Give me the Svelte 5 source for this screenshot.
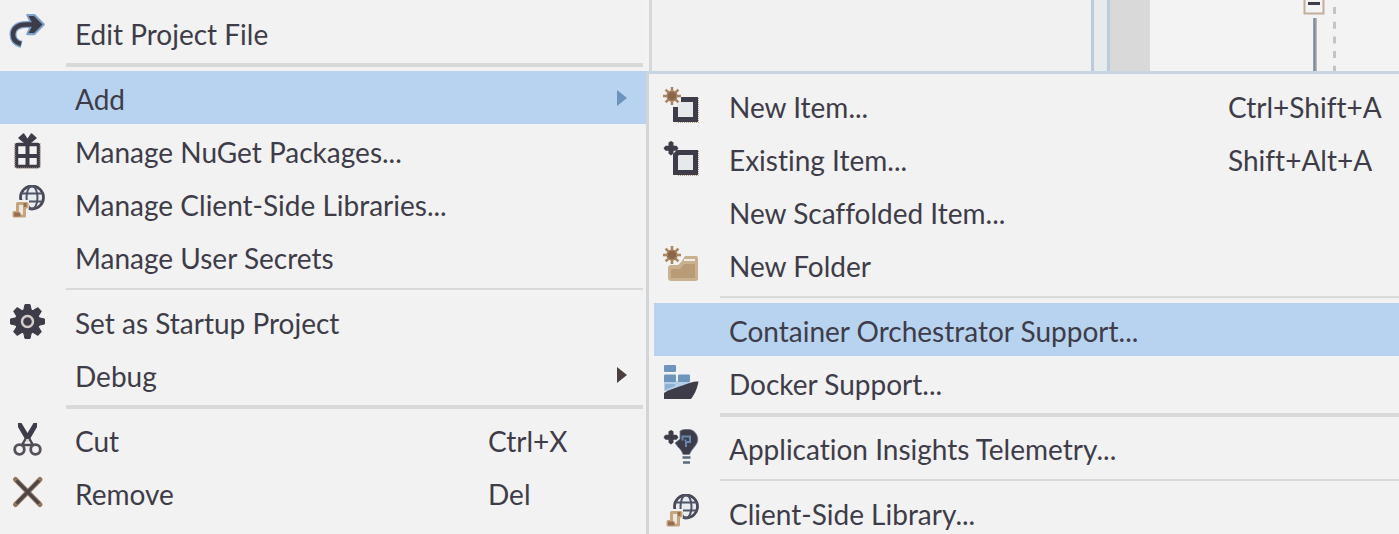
<script>
  const projectMenu = [
    { label: 'Edit Project File', icon: 'redo' },
    { separator: 'thick' },
    { label: 'Add', expands: true, active: true },
    { label: 'Manage NuGet Packages...', icon: 'gift' },
    { label: 'Manage Client-Side Libraries...', icon: 'globe' },
    { label: 'Manage User Secrets' },
    { separator: 'thin' },
    { label: 'Set as Startup Project', icon: 'gear' },
    { label: 'Debug', expands: true },
    { separator: 'thick' },
    { label: 'Cut', icon: 'scissors', keys: 'Ctrl+X' },
    { label: 'Remove', icon: 'cross', keys: 'Del' }
  ];

  const addMenu = [
    { label: 'New Item...', icon: 'newItem', keys: 'Ctrl+Shift+A' },
    { label: 'Existing Item...', icon: 'existingItem', keys: 'Shift+Alt+A' },
    { label: 'New Scaffolded Item...' },
    { label: 'New Folder', icon: 'folder' },
    { separator: 'thin' },
    { label: 'Container Orchestrator Support...', active: true },
    { label: 'Docker Support...', icon: 'docker' },
    { separator: 'thick' },
    { label: 'Application Insights Telemetry...', icon: 'insights' },
    { separator: 'thin' },
    { label: 'Client-Side Library...', icon: 'globe' }
  ];

  const eighths = [0, 45, 90, 135, 180, 225, 270, 315];
</script>

{#snippet star()}
  <circle cx="9" cy="9" r="5.5" fill="#94704f" />
  <g stroke="#a98561" stroke-width="2.600">
    {#each eighths as angle}
      <path d="M9 9V0" transform="rotate({angle} 9 9)" />
    {/each}
  </g>
  <circle cx="9" cy="9" r="4" fill="#8a674b" />
{/snippet}

{#snippet plus()}
  <path d="M8 1L10.500 2.500V5.700H13.500L15.500 8.200L13.500 10.700H10.500V13.500L8 15.500L5.500 13.500V10.700H2.500L0.500 8.200L2.500 5.700H5.500V2.500Z" fill="#3e3c49" />
{/snippet}

{#snippet icon(name)}
  <svg class="icon" viewBox="0 0 36 37" fill="none" aria-hidden="true">
    {#if name === 'redo'}
      <g stroke="#7ba2cc" stroke-width="7" stroke-linejoin="round">
        <path d="M27 10.5H17C8 10.5 4 15 4 20.500C4 25.500 7 29 12.500 30.500" />
      </g>
      <path d="M18.500 1H25L34.500 10.500L25 20H18.500L23 10.500Z" fill="#3e3c49" stroke="#7ba2cc" stroke-width="2.500" stroke-linejoin="round" />
      <path d="M28 10.500H17C8 10.500 4 15 4 20.500C4 25.500 7 28.500 12 30" stroke="#3e3c49" stroke-width="4.500" />
      <path d="M19.500 2H25L33.500 10.500L25 19H19.500L24 10.500Z" fill="#3e3c49" />
    {:else if name === 'gift'}
      <rect x="7.500" y="12.500" width="22" height="22" rx="1" fill="#f2f2f2" stroke="#3e3c49" stroke-width="3.500" />
      <path d="M18.500 11V35M7 24H30" stroke="#3e3c49" stroke-width="4" />
      <path d="M18.500 13L10 6L14.500 2L18.500 8L22.500 2L27 6Z" fill="#3e3c49" stroke="#3e3c49" stroke-width="1.500" stroke-linejoin="round" />
      <path d="M6 11V36H31V11" stroke="#b99a7e" stroke-width="1" stroke-dasharray="1 1" />
    {:else if name === 'globe'}
      <circle cx="23" cy="12.500" r="11.500" fill="#e9edf1" stroke="#4a4856" stroke-width="2.800" />
      <g stroke="#4f5464" stroke-width="2">
        <ellipse cx="23" cy="12.500" rx="5.500" ry="11.500" />
        <path d="M12.500 8.500H33.500M12.500 16.500H33.500" />
      </g>
      <path d="M7 17H18V22L16 32H4V27H7Z" fill="#f2f2f2" stroke="#f2f2f2" stroke-width="4" />
      <path d="M8.500 18.500H18V22H15.500V31H5V27.500H8.500Z" fill="#eee7dd" stroke="#c6a47e" stroke-width="3" stroke-linejoin="round" />
      <path d="M5 27.500H11.500V31.500H5ZM14.500 18H17.500V22H14.500Z" fill="#94704f" />
    {:else if name === 'gear'}
      <circle cx="18.500" cy="18.500" r="12.500" fill="#3e3c49" />
      {#each eighths as angle}
        <path d="M14.500 8L16 1.500H21L22.500 8Z" fill="#3e3c49" stroke="#3e3c49" stroke-linejoin="round" transform="rotate({angle} 18.500 18.500)" />
      {/each}
      <circle cx="18.500" cy="18.500" r="5.500" stroke="#d5cdc5" stroke-width="2.500" />
      <circle cx="18.500" cy="18.500" r="2.500" fill="#3e3c49" />
    {:else if name === 'scissors'}
      <path d="M9 2L12.500 2L18.500 12L24.500 2L28 2V6L21 18H16L9 6Z" fill="#3e3c49" />
      <path d="M17 17L12.500 25M20 17L24.500 25M12 24H25" stroke="#4d4954" stroke-width="2.500" />
      <circle cx="10.500" cy="28.500" r="4.800" stroke="#56505a" stroke-width="2.800" />
      <circle cx="26.500" cy="28.500" r="4.800" stroke="#56505a" stroke-width="2.800" />
      <circle cx="18.500" cy="19.500" r="1.500" fill="#d8d4d0" />
    {:else if name === 'cross'}
      <path d="M6.500 5.500L31 30.500M31 5.500L6.500 30.500" stroke="#94745a" stroke-width="5" stroke-linecap="round" />
      <path d="M7.500 6.500L30 29.500M30 6.500L7.500 29.500" stroke="#4b444b" stroke-width="3" />
    {:else if name === 'newItem'}
      <path d="M12.500 20V32.500H32.500V12.500H18" fill="#e5e9ea" stroke="#3e3c49" stroke-width="5" />
      <path d="M15 35.500H35.500V11" stroke="#b99a7e" stroke-width="1" stroke-dasharray="1 1" />
      {@render star()}
    {:else if name === 'existingItem'}
      <path d="M12.500 15L15 12.500H32.500V32.500H12.500Z" fill="#e5e9ea" stroke="#3e3c49" stroke-width="5" />
      <path d="M15 35.500H35.500V11" stroke="#b99a7e" stroke-width="1" stroke-dasharray="1 1" />
      {@render plus()}
    {:else if name === 'folder'}
      <path d="M20 13L22 10H34L35 12V34L33 35H7L5 33V21L7 19H15L19 15Z" fill="#c9b08e" />
      <path d="M21 14H32" stroke="#f2ede6" stroke-width="2" />
      <path d="M8 23H17L21 18H32V32H8Z" fill="#ba9b77" />
      {@render star()}
    {:else if name === 'docker'}
      <path d="M1 17H27V20L10 27H1Z" fill="#b5cfe9" />
      <g fill="#6e95bd">
        <rect x="1" y="1" width="12" height="7" rx="1" />
        <rect x="1" y="10.500" width="12" height="7.500" rx="1" />
        <rect x="15" y="10.500" width="12" height="7.500" rx="1" />
      </g>
      <path d="M2 20H12V22L2 26Z" fill="#8fb1d4" />
      <path d="M1 29C7 25 16 23 22 20.500C27 18.500 31 17 35.500 17.500C34 26 31 31 28 35H1Z" fill="#3e3c49" />
    {:else if name === 'insights'}
      <path d="M17 2C21 -0.500 27 -0.500 30.500 2C35.500 6 36 12 32.500 16.500C30 20 28 21.500 26.500 25.500H20C19 22 17 20 15 18L12 14L17 10Z" fill="#3e3c49" stroke="#6e8096" stroke-width="0.800" />
      <path d="M19.500 11.500V7.500H27V13H23V18M22.500 10.500V12" stroke="#6488b0" stroke-width="2" />
      <path d="M19.500 28.500H27.500M20 33.500H27" stroke="#5c6a7c" stroke-width="2.500" />
      {@render plus()}
    {/if}
  </svg>
{/snippet}

{#snippet menu(items)}
  {#each items as item}
    {#if item.separator}
      <li class="separator {item.separator}" role="separator"></li>
    {:else}
      <li role="none">
        <button type="button" role="menuitem" class="row" class:active={item.active} aria-haspopup={item.expands ? 'menu' : undefined}>
          {@render icon(item.icon)}
          <span class="label">{item.label}</span>
          <span class="keys">{item.keys ?? ''}</span>
          <span class="expander">
            {#if item.expands}
              <svg viewBox="0 0 11 18" aria-hidden="true"><path d="M0 1L10 9L0 17Z" /></svg>
            {/if}
          </span>
        </button>
      </li>
    {/if}
  {/each}
{/snippet}

<main>
  <ul class="menu project" role="menu" aria-label="Project">
    {@render menu(projectMenu)}
  </ul>
  <section class="side">
    <div class="editor">
      <div class="pane"></div>
      <div class="splitter"></div>
      <div class="margin"></div>
      <div class="code">
        <svg viewBox="0 0 34 71" fill="none" aria-hidden="true">
          <path d="M1.500 0V13.500H20.500V0" stroke="#c2ae9b" stroke-width="2" />
          <path d="M5 3.500H17" stroke="#3e3c49" stroke-width="3" />
          <path d="M12 18V71" stroke="#c9b29b" stroke-width="4" />
          <path d="M11.500 18V71" stroke="#6d8fb5" stroke-width="2" />
          <path d="M31.500 7V71" stroke="#c4c4c4" stroke-width="3" stroke-dasharray="7 7.700" />
        </svg>
      </div>
    </div>
    <ul class="menu add" role="menu" aria-label="Add">
      {@render menu(addMenu)}
    </ul>
  </section>
</main>

<style>
  :global(body) {
    background: #f3f3f3;
  }

  main {
    display: grid;
    grid-template-columns: 646fr 753fr;
    height: 100vh;
    overflow: hidden;
    font-family: Lato, 'Open Sans', sans-serif;
    font-size: 28px;
    font-variant-ligatures: none;
    line-height: 36px;
    color: #3e3c49;
  }

  .menu {
    list-style: none;
    margin: 0;
    background: #f2f2f2;
  }

  .project {
    --keys-width: 129px;
    padding: 6px 0 0;
  }

  .add {
    --keys-width: 142px;
    flex: 1;
    padding: 5px 0 0 5px;
    border-top: 3px solid #c8d5e2;
    border-left: 3px solid #d2d5d8;
  }

  .row {
    display: flex;
    align-items: center;
    width: 100%;
    height: 53px;
    padding: 0 0 0 9px;
    border: 0;
    background: none;
    color: inherit;
    font: inherit;
    text-align: left;
    white-space: nowrap;
  }

  .active {
    background: #b8d3ef;
  }

  .icon {
    flex: none;
    width: 36px;
    height: 37px;
    margin-right: 30px;
  }

  .label,
  .keys {
    padding-top: 2px;
  }

  .label {
    flex: 1;
  }

  .keys {
    flex: none;
    width: var(--keys-width);
  }

  .expander {
    flex: none;
    display: flex;
    width: 29px;
  }

  .expander svg {
    width: 11px;
    height: 18px;
    fill: #4b403f;
  }

  .active .expander svg {
    fill: #6c93bd;
  }

  .separator {
    display: flex;
    align-items: center;
    height: 12px;
    padding: 0 3px 0 66px;
  }

  .add .separator {
    padding-right: 0;
  }

  .separator::before {
    content: '';
    flex: 1;
    height: 2px;
    background: #d9d9d9;
  }

  .thick::before {
    height: 4px;
  }

  .side {
    display: flex;
    flex-direction: column;
    min-width: 0;
  }

  .editor {
    display: flex;
    height: 71px;
    background: #f3f3f3;
  }

  .pane {
    flex: 1;
    margin-left: 3px;
    border-left: 3px solid #d6d7d9;
    background: #f1f1f1;
  }

  .splitter {
    width: 13px;
    border: solid #bccbdb;
    border-width: 0 3px;
    background: #e7ebec;
  }

  .margin {
    width: 40px;
    background: #d9d9d9;
  }

  .code {
    width: 249px;
  }

  .code svg {
    display: block;
    width: 34px;
    height: 71px;
    margin-left: 153px;
  }
</style>
